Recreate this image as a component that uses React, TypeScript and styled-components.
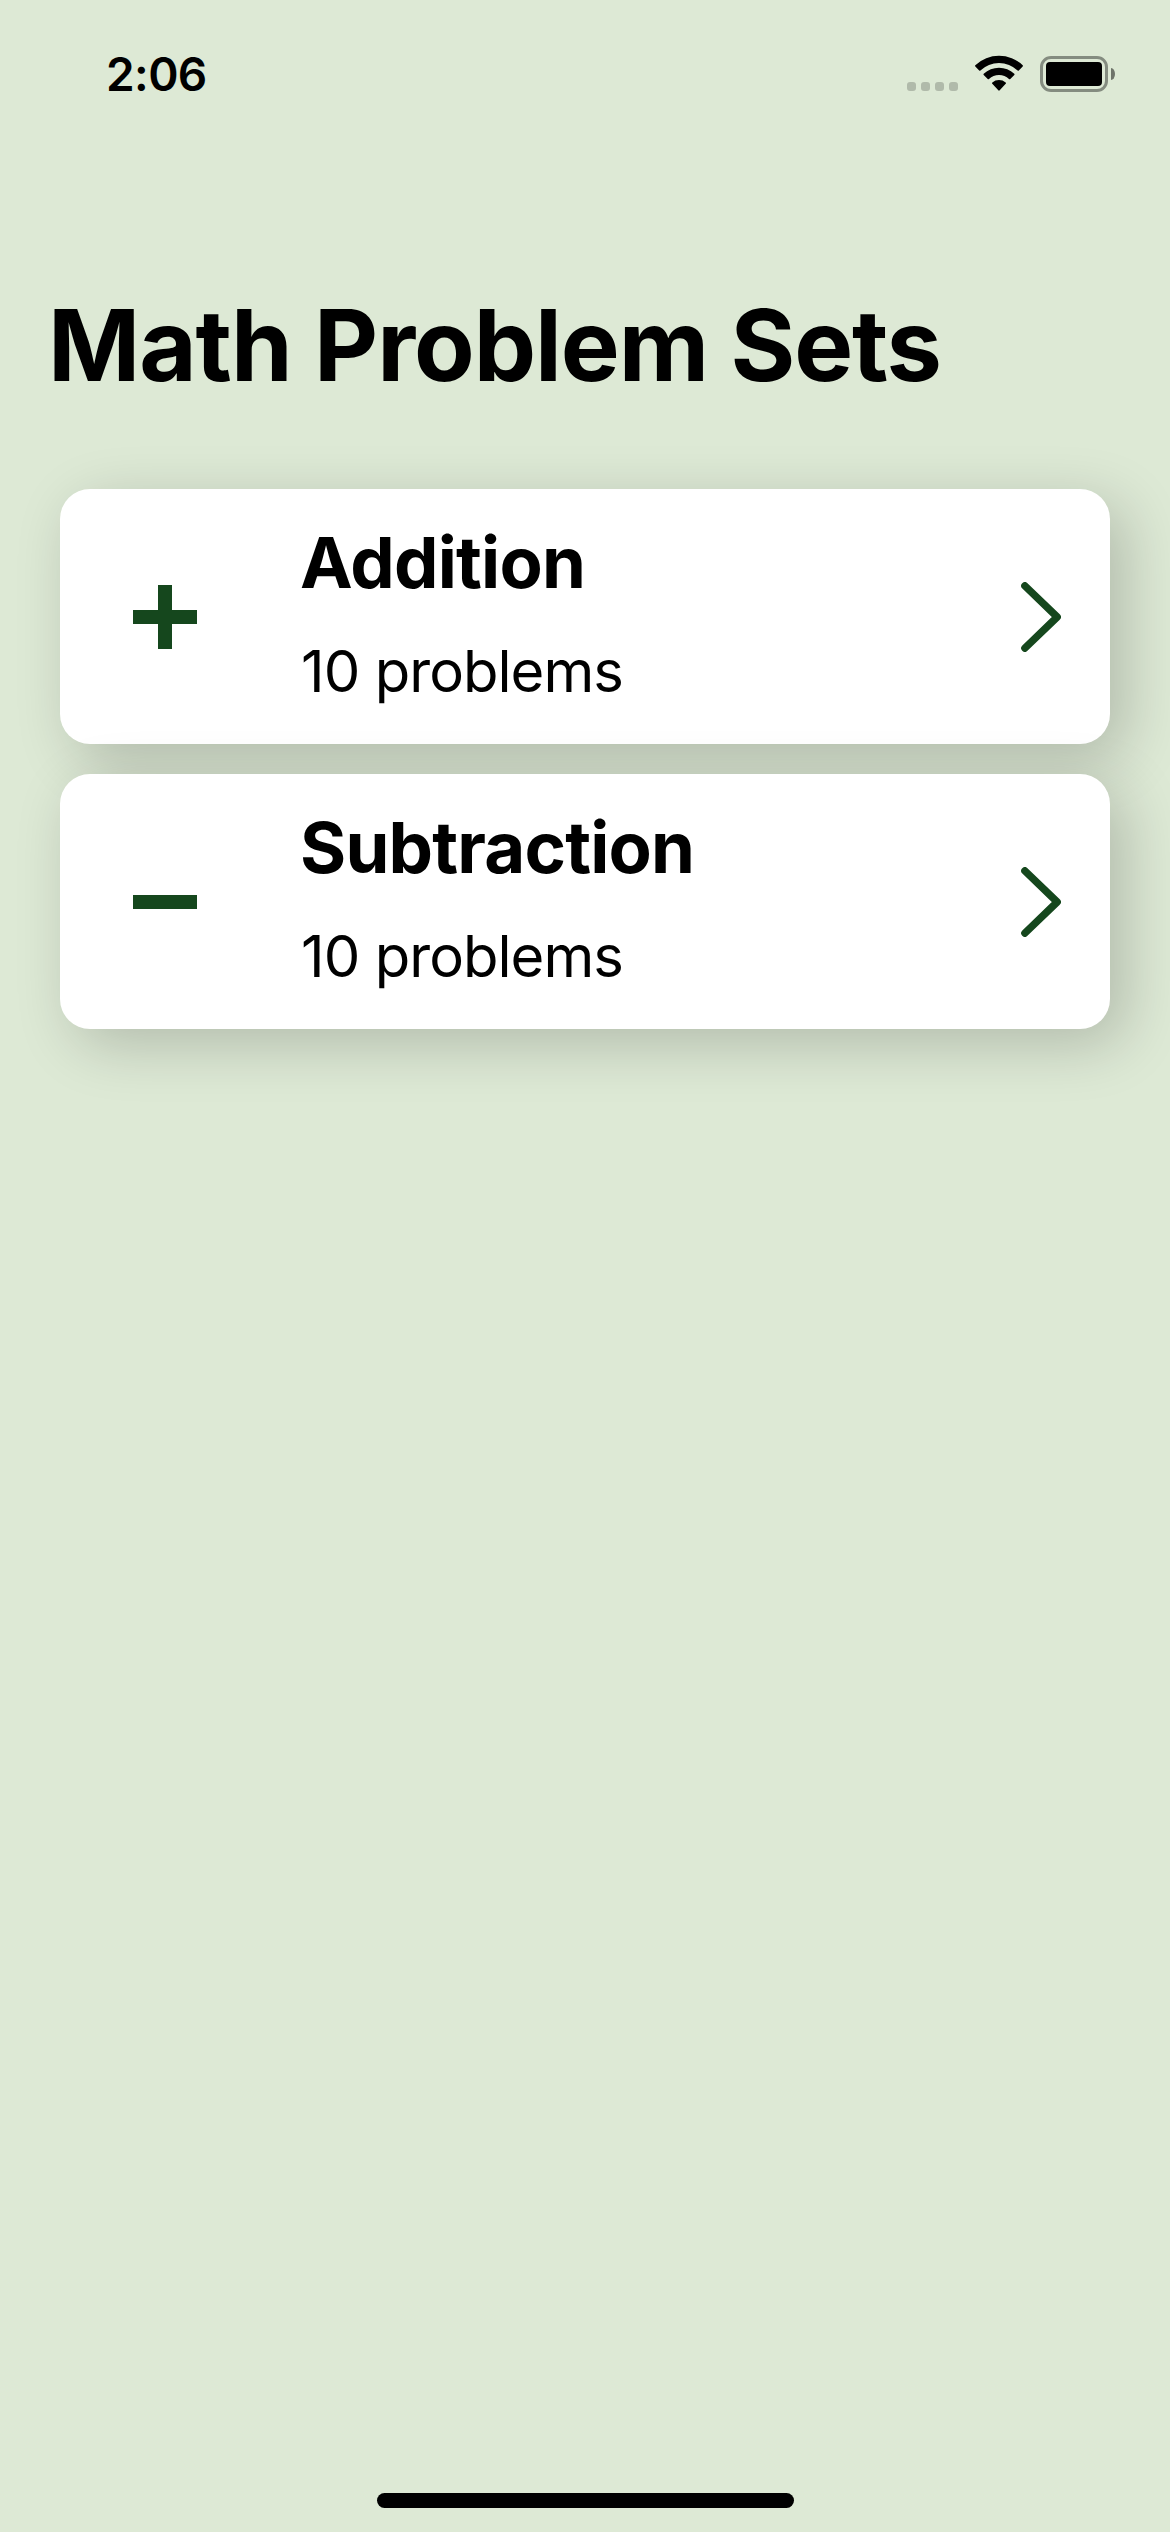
import React from "react";
import styled, { createGlobalStyle } from "styled-components";

const GlobalStyle = createGlobalStyle`
  html, body { margin: 0; padding: 0; background: #dde9d5; }
  *, *::before, *::after { box-sizing: border-box; }
`;

const ink = "#000000";
const leaf = "#15471d";

const Screen = styled.div`
  display: flex;
  flex-direction: column;
  width: 1170px;
  height: 2532px;
  overflow: hidden;
  background: #dde9d5;
  color: ${ink};
  font-family: Inter, "Liberation Sans", sans-serif;
`;

const StatusBar = styled.header`
  display: flex;
  justify-content: space-between;
  height: 141px;
  padding: 45px 55px 0 106px;
  flex: none;
`;

const Clock = styled.time`
  font-size: 46px;
  line-height: 58px;
  font-weight: 600;
  letter-spacing: -0.6px;
`;

const Indicators = styled.div`
  display: flex;
  align-items: flex-end;
  height: 47px;
`;

const CellDots = styled.div`
  display: flex;
  gap: 5px;
  margin: 0 17px 1px 0;
`;

const CellDot = styled.span`
  width: 9px;
  height: 9px;
  border-radius: 3px;
  background: rgba(0, 0, 0, 0.2);
`;

const WifiIcon = styled.svg`
  display: block;
  width: 48px;
  height: 36px;
  margin: 0 17px 1px 0;
`;

const BatteryShell = styled.div`
  width: 68px;
  height: 36px;
  padding: 3px;
  border: 3px solid rgba(0, 0, 0, 0.4);
  border-radius: 11px;
`;

const BatteryLevel = styled.div`
  height: 100%;
  border-radius: 4px;
  background: ${ink};
`;

const BatteryCap = styled.span`
  width: 4px;
  height: 12px;
  margin: 0 0 12px 3px;
  border-radius: 0 4px 4px 0 / 0 6px 6px 0;
  background: rgba(0, 0, 0, 0.5);
`;

const Content = styled.main`
  flex: 1;
`;

const Title = styled.h1`
  margin: 0;
  padding: 143px 0 0 48px;
  height: 348px;
  font-size: 99px;
  line-height: 122px;
  font-weight: 700;
  letter-spacing: -1.05px;
  white-space: nowrap;
`;

const SetList = styled.ul`
  display: flex;
  flex-direction: column;
  gap: 30px;
  margin: 0;
  padding: 0 60px;
  list-style: none;
`;

const SetCard = styled.li`
  display: grid;
  grid-template-columns: 210px 1fr 139px;
  align-items: center;
  height: 255px;
  border-radius: 30px;
  background: #ffffff;
  box-shadow: 15px 15px 60px rgba(0, 0, 0, 0.2);
`;

const Symbol = styled.svg`
  display: block;
  width: 64px;
  height: 64px;
  margin: 0 auto;
  fill: ${leaf};
`;

const SetText = styled.div`
  display: flex;
  flex-direction: column;
  align-self: start;
  padding: 31px 0 0 30px;
`;

const SetName = styled.h2`
  margin: 0;
  font-size: 70.6px;
  line-height: 86px;
  font-weight: 700;
  letter-spacing: -0.8px;
`;

const SetCount = styled.p`
  margin: 29px 0 0 1px;
  font-size: 58px;
  line-height: 72px;
  font-weight: 400;
  letter-spacing: -0.95px;
`;

const Chevron = styled.svg`
  display: block;
  width: 40px;
  height: 70px;
  margin-left: 50px;
  fill: none;
  stroke: ${leaf};
  stroke-width: 7.4;
  stroke-linecap: round;
  stroke-linejoin: round;
`;

const HomeArea = styled.footer`
  display: flex;
  justify-content: center;
  height: 39px;
  flex: none;
`;

const HomeBar = styled.div`
  width: 417px;
  height: 15px;
  border-radius: 8px;
  background: ${ink};
`;

type ProblemSet = { name: string; count: number; symbol: "plus" | "minus" };

const problemSets: ProblemSet[] = [
  { name: "Addition", count: 10, symbol: "plus" },
  { name: "Subtraction", count: 10, symbol: "minus" },
];

const symbolPaths = {
  plus: "M25 0H39V25H64V39H39V64H25V39H0V25H25Z",
  minus: "M0 25H64V39H0Z",
};

function ProblemSetCard({ name, count, symbol }: ProblemSet) {
  return (
    <SetCard>
      <Symbol viewBox="0 0 64 64" aria-hidden="true">
        <path d={symbolPaths[symbol]} />
      </Symbol>
      <SetText>
        <SetName>{name}</SetName>
        <SetCount>{count} problems</SetCount>
      </SetText>
      <Chevron viewBox="0 0 40 70" aria-hidden="true">
        <path d="M3.9 3.8L36.2 35L3.9 66.2" />
      </Chevron>
    </SetCard>
  );
}

export default function App() {
  return (
    <Screen>
      <GlobalStyle />
      <StatusBar>
        <Clock>2:06</Clock>
        <Indicators>
          <CellDots>
            <CellDot />
            <CellDot />
            <CellDot />
            <CellDot />
          </CellDots>
          <WifiIcon viewBox="0 0 48 36" aria-hidden="true">
            <path d="M0.3 10.2A34.5 34.5 0 0 1 47.7 10.2Q48.2 10.8 47.7 11.4L43.8 15.4Q43.2 15.9 42.6 15.4A27 27 0 0 0 5.4 15.4Q4.8 15.9 4.2 15.4L0.3 11.4Q-0.2 10.8 0.3 10.2Z" />
            <path d="M8.7 18.7A22.6 22.6 0 0 1 39.3 18.7Q39.9 19.3 39.3 19.9L35.3 23.9Q34.7 24.5 34 23.9A14.5 14.5 0 0 0 14 23.9Q13.3 24.5 12.7 23.9L8.7 19.9Q8.1 19.3 8.7 18.7Z" />
            <path d="M17.3 27.4A10.6 10.6 0 0 1 30.7 27.4Q31.4 28 30.7 28.7L24.7 35.3Q24 36 23.3 35.3L17.3 28.7Q16.6 28 17.3 27.4Z" />
          </WifiIcon>
          <BatteryShell>
            <BatteryLevel />
          </BatteryShell>
          <BatteryCap />
        </Indicators>
      </StatusBar>
      <Content>
        <Title>Math Problem Sets</Title>
        <SetList>
          {problemSets.map((set) => (
            <ProblemSetCard key={set.name} {...set} />
          ))}
        </SetList>
      </Content>
      <HomeArea>
        <HomeBar />
      </HomeArea>
    </Screen>
  );
}
